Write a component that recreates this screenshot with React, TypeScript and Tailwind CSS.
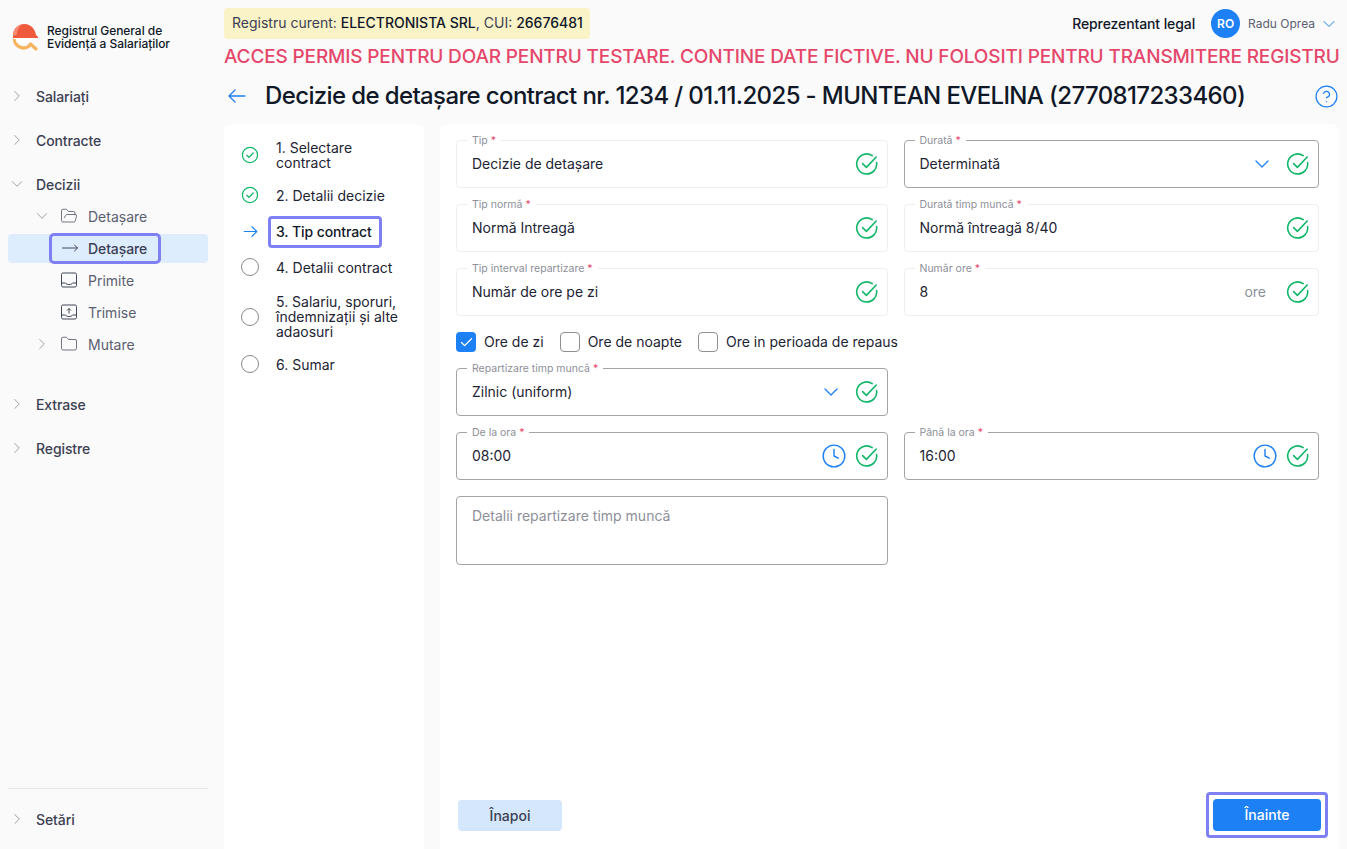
import { ReactNode } from 'react';
import { Check, ChevronDown, ChevronRight, Clock, CircleHelp, Folder, FolderOpen } from 'lucide-react';

function CheckCircle() {
  return (
    <svg width="24" height="24" viewBox="0 0 24 24" fill="none" stroke="#12b76a" strokeWidth="1.6" strokeLinecap="round" strokeLinejoin="round" className="shrink-0">
      <path d="M21.600 10.500A10 10 0 1 1 17.200 3.600" />
      <path d="M7.600 11.600l3.800 3.800 9.800-10.400" />
    </svg>
  );
}

function StepCheck() {
  return (
    <svg width="18" height="18" viewBox="0 0 18 18" fill="none" stroke="#12b76a" strokeWidth="1.3" strokeLinecap="round" strokeLinejoin="round" className="shrink-0">
      <circle cx="9" cy="9" r="7.600" />
      <path d="M5.800 9.200l2.200 2.200 4.200-4.400" />
    </svg>
  );
}

function StepEmpty() {
  return <span className="w-[18px] h-[18px] rounded-full border border-[#8a8a8a] shrink-0" />;
}

function LongArrow({ width, height, stroke = 1.3, className }: { width: number; height: number; stroke?: number; className: string }) {
  return (
    <svg width={width} height={height} viewBox="0 0 18 14" fill="none" stroke="currentColor" strokeWidth={stroke} strokeLinecap="round" strokeLinejoin="round" className={className}>
      <path d="M1 7h16M11 1l6 6-6 6" />
    </svg>
  );
}

function Logo() {
  return (
    <svg width="28" height="28" viewBox="0 0 28 28" className="shrink-0">
      <path d="M2.500 15a9 9 0 0 0 16 5.500" fill="none" stroke="#f7b45f" strokeWidth="3.400" />
      <path d="M3 14h16l-1 5H5z" fill="#ffffff" />
      <path d="M18.500 20l5.500 5" stroke="#f7b45f" strokeWidth="3.200" strokeLinecap="round" />
      <path d="M1 14v-2.500A11.500 11.500 0 0 1 12.500 0C19 0 23 5 24 11l2 2v1z" fill="#ef5a3c" />
      <path d="M1 11.500A11.500 11.500 0 0 1 10 .3C7 3 5 6 5 9.500c0 1-1 2.500-4 2z" fill="#f98a73" />
    </svg>
  );
}

function TopItem({ label, open }: { label: string; open?: boolean }) {
  return (
    <div className="flex items-center h-8 pl-2 gap-[10px]">
      {open ? (
        <ChevronDown size={18} strokeWidth={1.1} className="text-[#8b8d98]" />
      ) : (
        <ChevronRight size={18} strokeWidth={1.1} className="text-[#8b8d98]" />
      )}
      <span className="text-[14px] font-medium tracking-[-0.1px] text-[#3c4052]">{label}</span>
    </div>
  );
}

function SubItem({ icon, label, chevron }: { icon: ReactNode; label: string; chevron?: 'down' | 'right' }) {
  return (
    <div className="flex items-center h-8 pl-[33px]">
      <span className="w-[27px] flex">
        {chevron === 'down' && <ChevronDown size={18} strokeWidth={1.1} className="text-[#8b8d98]" />}
        {chevron === 'right' && <ChevronRight size={18} strokeWidth={1.1} className="text-[#8b8d98]" />}
      </span>
      <span className="w-7 flex">{icon}</span>
      <span className="text-[14px] text-[#5a5e70]">{label}</span>
    </div>
  );
}

function Sidebar() {
  return (
    <aside className="w-[216px] shrink-0 h-full flex flex-col">
      <div className="flex gap-[7px] pl-3 pt-[24px] h-[80px] items-start">
        <Logo />
        <div className="text-[12px] leading-[13px] font-medium tracking-[-0.05px] text-[#101828]">
          Registrul General de
          <br />
          Evidență a Salariaților
        </div>
      </div>
      <nav className="flex flex-col gap-3">
        <TopItem label="Salariați" />
        <TopItem label="Contracte" />
        <div className="flex flex-col">
          <TopItem label="Decizii" open />
          <SubItem chevron="down" icon={<FolderOpen size={18} strokeWidth={1} className="text-[#44485a]" />} label="Detașare" />
          <div className="flex items-center h-8 px-2">
            <div className="relative w-full h-[29px] bg-[#deedfd] rounded-[4px] flex items-center pl-[54px]">
              <div className="absolute left-[44px] top-[2px] w-[106px] h-[25px] outline-3 outline-[#8080f5] rounded-[2px]" />
              <svg width="16" height="8" viewBox="0 0 16 8" fill="none" stroke="#44485a" strokeWidth="1" strokeLinecap="round" strokeLinejoin="round" className="mr-[10px]">
                <path d="M.5 4h15M12.500 1l3 3-3 3" />
              </svg>
              <span className="text-[14px] font-medium tracking-[-0.1px] text-[#3c4052]">Detașare</span>
            </div>
          </div>
          <SubItem
            icon={
              <svg width="18" height="18" viewBox="0 0 18 18" fill="none" stroke="#44485a" strokeWidth="1">
                <rect x="1.500" y="2" width="15" height="14" rx="1.500" />
                <path d="M1.500 12h4c.5 1 1.500 1.500 3.500 1.500s3-.5 3.500-1.500h4" />
              </svg>
            }
            label="Primite"
          />
          <SubItem
            icon={
              <svg width="18" height="18" viewBox="0 0 18 18" fill="none" stroke="#44485a" strokeWidth="1">
                <rect x="1.500" y="2" width="15" height="14" rx="1.500" />
                <path d="M1.500 12h4c.5 1 1.500 1.500 3.500 1.500s3-.5 3.500-1.500h4" />
                <path d="M9 10.500V5.500M7 7.500l2-2 2 2" />
              </svg>
            }
            label="Trimise"
          />
          <SubItem chevron="right" icon={<Folder size={18} strokeWidth={1} className="text-[#44485a]" />} label="Mutare" />
        </div>
        <div className="h-[4px]" />
        <TopItem label="Extrase" />
        <TopItem label="Registre" />
      </nav>
      <div className="mt-auto mx-2 border-t border-[#e4e5e7] pt-[14px] pb-[14px]">
        <div className="-mx-2">
          <TopItem label="Setări" />
        </div>
      </div>
    </aside>
  );
}

function Field({
  label,
  value,
  dark,
  chevron,
  clock,
  suffix,
}: {
  label: string;
  value: string;
  dark?: boolean;
  chevron?: boolean;
  clock?: boolean;
  suffix?: string;
}) {
  return (
    <div className={`relative h-12 rounded-[4px] border flex items-center pl-[15px] pr-[8px] ${dark ? 'border-[#a4a4a4]' : 'border-[#eceef0]'}`}>
      <span className="absolute -top-[6px] left-[10px] bg-white px-[5px] text-[10.5px] leading-[12px] text-[#8d8f99]">
        {label} <span className="text-[#e5476b]">*</span>
      </span>
      <span className="flex-1 text-[14px] text-[#1d2433] pb-[2px]">{value}</span>
      {suffix && <span className="text-[14px] text-[#8d8f99] mr-[20px] pb-[2px]">{suffix}</span>}
      {chevron && <ChevronDown size={24} strokeWidth={1.3} className="text-[#1d80f5] mr-[12px]" />}
      {clock && <Clock size={26} strokeWidth={1.3} className="text-[#1d80f5] mr-[8px]" />}
      <CheckCircle />
    </div>
  );
}

function CheckOption({ label, checked }: { label: string; checked?: boolean }) {
  return (
    <label className="flex items-center gap-2">
      <span className={`w-5 h-5 rounded-[4px] flex items-center justify-center ${checked ? 'bg-[#1d80f5]' : 'border border-[#8f8f8f]'}`}>
        {checked && <Check size={15} strokeWidth={2} className="text-white" />}
      </span>
      <span className="text-[14px] text-[#1d2433] pb-[2px]">{label}</span>
    </label>
  );
}

function Steps() {
  return (
    <div className="w-[200px] shrink-0 bg-white rounded-t-lg pt-[15px] pl-[17px] pr-3 text-[14px] leading-[15px] text-[#1d2433]">
      <div className="flex items-center gap-[17px] h-8">
        <StepCheck />
        <span>
          1. Selectare
          <br />
          contract
        </span>
      </div>
      <div className="flex items-center gap-[17px] h-8 mt-[8px]">
        <StepCheck />
        <span>2. Detalii decizie</span>
      </div>
      <div className="flex items-center h-8 mt-[4px]">
        <LongArrow width={15} height={11} stroke={1.5} className="text-[#1d80f5] shrink-0 ml-[2px] mr-[18px]" />
        <span className="relative font-medium tracking-[-0.1px] text-[#101828]">
          <span className="absolute -left-[5px] -right-[7px] -top-[5px] -bottom-[6px] outline-3 outline-[#8080f5] rounded-[1px]" />
          3. Tip contract
        </span>
      </div>
      <div className="flex items-center gap-[17px] h-8 mt-[4px]">
        <StepEmpty />
        <span>4. Detalii contract</span>
      </div>
      <div className="flex items-center gap-[17px] mt-[11px]">
        <StepEmpty />
        <span>
          5. Salariu, sporuri,
          <br />
          îndemnizații și alte
          <br />
          adaosuri
        </span>
      </div>
      <div className="flex items-center gap-[17px] h-8 mt-[9px]">
        <StepEmpty />
        <span>6. Sumar</span>
      </div>
    </div>
  );
}

function Form() {
  return (
    <div className="flex-1 bg-white rounded-t-lg pt-4 pl-4 pr-5 flex flex-col pb-[18px]">
      <div className="grid grid-cols-[431.5px_415.5px] gap-x-4 gap-y-4">
        <Field label="Tip" value="Decizie de detașare" />
        <Field label="Durată" value="Determinată" dark chevron />
        <Field label="Tip normă" value="Normă Intreagă" />
        <Field label="Durată timp muncă" value="Normă întreagă 8/40" />
        <Field label="Tip interval repartizare" value="Număr de ore pe zi" />
        <Field label="Număr ore" value="8" suffix="ore" />
        <div className="col-span-2 flex items-center gap-4 h-5">
          <CheckOption label="Ore de zi" checked />
          <CheckOption label="Ore de noapte" />
          <CheckOption label="Ore in perioada de repaus" />
        </div>
        <div className="col-start-1">
          <Field label="Repartizare timp muncă" value="Zilnic (uniform)" dark chevron />
        </div>
        <div />
        <Field label="De la ora" value="08:00" dark clock />
        <Field label="Până la ora" value="16:00" dark clock />
        <div className="h-[69px] rounded-[4px] border border-[#a4a4a4] px-[15px] pt-[8px] text-[14px] text-[#8d8f99]">
          Detalii repartizare timp muncă
        </div>
      </div>
      <div className="mt-auto flex items-end justify-between">
        <button className="ml-[2px] w-[104px] h-[31px] rounded-[4px] bg-[#d5e7fc] text-[14px] font-medium text-[#3c4052] pb-[1px]">Înapoi</button>
        <button className="relative w-[108px] h-8 mr-[-2px] rounded-[4px] bg-[#1d80f5] text-[14px] font-medium text-white pb-[2px]">
          <span className="absolute -inset-[4px] outline-3 outline-[#8080f5] rounded-[1px]" />
          Înainte
        </button>
      </div>
    </div>
  );
}

export default function App() {
  return (
    <div className="h-[849px] w-[1347px] overflow-hidden bg-[#fafafa] flex font-['Inter',sans-serif]">
      <Sidebar />
      <main className="flex-1 min-w-0 flex flex-col px-2">
        <div className="flex items-center justify-between pt-2 h-[39px] shrink-0">
          <div className="h-[31px] rounded-[4px] bg-[#faf3c8] pl-2 pr-[7px] pb-[2px] flex items-center text-[14px] text-[#3c4052]">
            Registru curent:&nbsp;<span className="font-medium text-[#101828]">ELECTRONISTA SRL</span>, CUI:&nbsp;
            <span className="font-medium text-[#101828]">26676481</span>
          </div>
          <div className="flex items-center">
            <span className="text-[14px] font-medium tracking-[-0.1px] text-[#101828] mr-4">Reprezentant legal</span>
            <span className="w-[29px] h-[29px] rounded-full bg-[#1d80f5] text-white text-[12px] font-semibold flex items-center justify-center">RO</span>
            <span className="text-[12px] text-[#5a5e70] ml-2 mr-1">Radu Oprea</span>
            <ChevronDown size={20} strokeWidth={1.2} className="text-[#1d80f5]" />
          </div>
        </div>
        <div className="h-[36px] shrink-0 flex items-center text-[19px] tracking-[-0.15px] font-medium text-[#e5476b] whitespace-nowrap">
          ACCES PERMIS PENTRU DOAR PENTRU TESTARE. CONTINE DATE FICTIVE. NU FOLOSITI PENTRU TRANSMITERE REGISTRU
        </div>
        <div className="h-[42px] shrink-0 flex items-center">
          <LongArrow width={18} height={14} className="text-[#1d80f5] ml-1 mr-[19px] rotate-180" />
          <h1 className="flex-1 text-[24px] font-medium tracking-[-0.625px] text-[#101828] whitespace-nowrap">
            Decizie de detașare contract nr. 1234 / 01.11.2025 - MUNTEAN EVELINA (2770817233460)
          </h1>
          <CircleHelp size={25} strokeWidth={1.2} className="text-[#1d80f5]" />
        </div>
        <div className="h-[7px] shrink-0" />
        <div className="flex-1 min-h-0 flex gap-4">
          <Steps />
          <Form />
        </div>
      </main>
    </div>
  );
}
